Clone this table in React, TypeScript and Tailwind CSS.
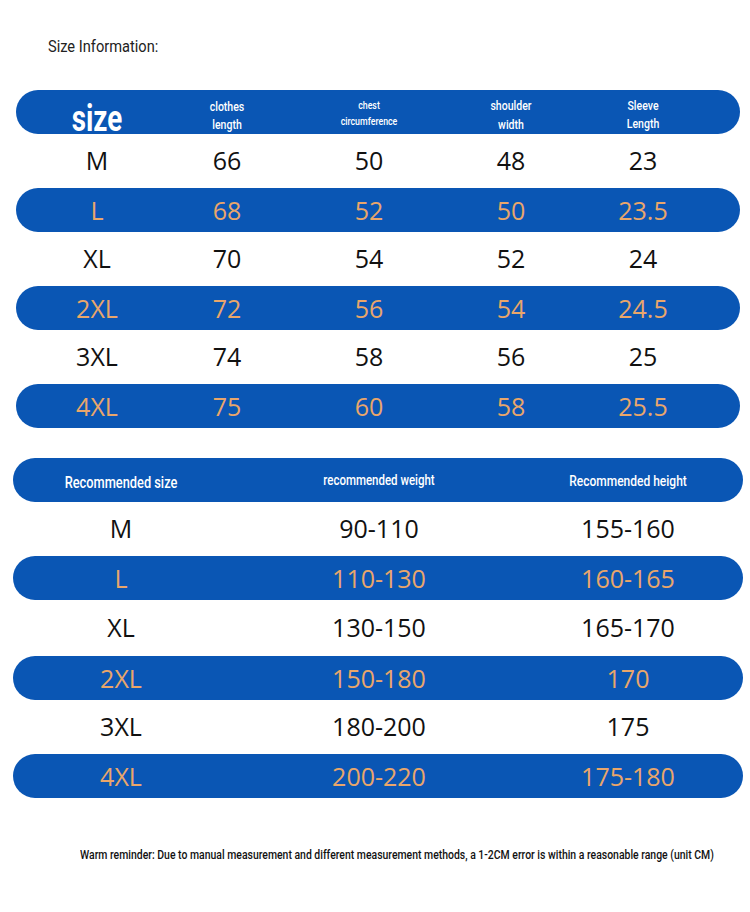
const sizeRows = [
  ["M", "66", "50", "48", "23"],
  ["L", "68", "52", "50", "23.5"],
  ["XL", "70", "54", "52", "24"],
  ["2XL", "72", "56", "54", "24.5"],
  ["3XL", "74", "58", "56", "25"],
  ["4XL", "75", "60", "58", "25.5"],
];

const recRows = [
  ["M", "90-110", "155-160"],
  ["L", "110-130", "160-165"],
  ["XL", "130-150", "165-170"],
  ["2XL", "150-180", "170"],
  ["3XL", "180-200", "175"],
  ["4XL", "200-220", "175-180"],
];

// narrow look: Roboto squeezed horizontally
const condensed = { fontFamily: 'Roboto, "Liberation Sans", sans-serif' };
const body = { fontFamily: '"Open Sans", "Noto Sans", sans-serif' };

const sizeCols = "grid grid-cols-[162px_98px_186px_98px_166px] items-center text-center";
const recCols = "grid grid-cols-[216px_300px_198px] items-center text-center";

export default function App() {
  return (
    <div className="w-[750px] h-[912px] bg-white relative overflow-hidden">
      <div className="pt-[34px] pl-[48px] h-[90px]">
        <p
          className="inline-block origin-left scale-x-[0.86] text-[17px] text-[#222] leading-[20px]"
          style={condensed}
        >
          Size Information:
        </p>
      </div>

      {/* size chart */}
      <div className="ml-[16px] w-[724px]">
        <div className={`${sizeCols} h-[44px] rounded-full bg-[#0a56b4] text-white`} style={condensed}>
          <span className="scale-x-[0.75] text-[37px] font-bold leading-none pt-[10px]">size</span>
          <span className="scale-x-[0.78] text-[13.5px] font-medium leading-[18px] pt-[2px]">clothes<br />length</span>
          <span className="scale-x-[0.8] text-[11px] font-medium leading-[16px]">chest<br />circumference</span>
          <span className="scale-x-[0.78] text-[13.5px] font-medium leading-[19px] pt-[2px]">shoulder<br />width</span>
          <span className="scale-x-[0.78] text-[13.5px] font-medium leading-[18px]">Sleeve<br />Length</span>
        </div>
        {sizeRows.map((r, i) => {
          const odd = i % 2 === 1;
          return (
            <div
              key={r[0]}
              className={
                odd
                  ? `${sizeCols} h-[44px] rounded-full bg-[#0a56b4] text-[#e9a66b] text-[25px]`
                  : `${sizeCols} h-[54px] text-[#111] text-[25px]`
              }
              style={body}
            >
              {r.map((c, j) => (
                <span key={j} className={odd ? "pt-[2px]" : "pt-[0px]"}>{c}</span>
              ))}
            </div>
          );
        })}
      </div>

      {/* recommended chart */}
      <div className="ml-[13px] w-[730px] mt-[30px]">
        <div className={`${recCols} h-[44px] rounded-full bg-[#0a56b4] text-white`} style={condensed}>
          <span className="scale-x-[0.8] text-[16px] font-medium pt-[6px]">Recommended size</span>
          <span className="scale-x-[0.82] text-[14px] font-medium">recommended weight</span>
          <span className="scale-x-[0.8] text-[15px] font-medium pt-[2px]">Recommended height</span>
        </div>
        {recRows.map((r, i) => {
          const odd = i % 2 === 1;
          const whiteH = i === 2 ? "h-[56px]" : "h-[54px]";
          return (
            <div
              key={r[0]}
              className={
                odd
                  ? `${recCols} h-[44px] rounded-full bg-[#0a56b4] text-[#e9a66b] text-[25px]`
                  : `${recCols} ${whiteH} text-[#111] text-[25px]`
              }
              style={body}
            >
              {r.map((c, j) => (
                <span key={j} className={odd ? "pt-[2px]" : "pt-[0px]"}>{c}</span>
              ))}
            </div>
          );
        })}
      </div>

      <p
        className="absolute left-[80px] top-[846px] origin-left scale-x-[0.87] text-[12px] font-medium text-[#111] whitespace-nowrap"
        style={condensed}
      >
        Warm reminder: Due to manual measurement and different measurement methods, a 1-2CM error is within a reasonable range (unit CM)
      </p>
    </div>
  );
}
